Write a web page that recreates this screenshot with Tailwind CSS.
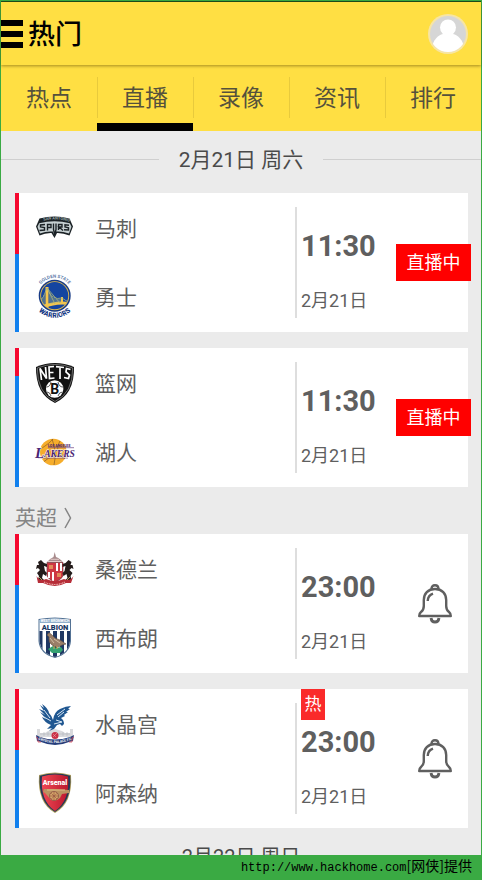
<!DOCTYPE html>
<html lang="zh-CN">
<head>
<meta charset="utf-8">
<meta name="viewport" content="width=device-width, initial-scale=1">
<title>热门</title>
<script src="https://cdn.jsdelivr.net/npm/@tailwindcss/browser@4"></script>
</head>
<body class="flex h-screen flex-col bg-[#3aaa43] font-['Roboto','Noto_Sans_CJK_SC',sans-serif] text-[#5f5f5f]">
<div class="mx-px mt-px flex min-h-0 flex-1 flex-col border-t border-[#174c1c] bg-[#ebebeb]">

  <header class="relative z-10 flex h-[63px] shrink-0 items-center bg-[#ffdf43] pr-[13px] shadow-[0_1px_3px_rgba(90,70,0,0.55)]">
    <button type="button" aria-label="菜单" class="flex w-[22px] flex-col gap-[5px]">
      <span class="h-[6px] bg-black"></span><span class="h-[6px] bg-black"></span><span class="h-[6px] bg-black"></span>
    </button>
    <h1 class="ml-[5px] flex-1 pt-[2px] text-[27px] leading-[36px] font-medium text-black">热门</h1>
    <button type="button" aria-label="我的">
      <svg class="size-[40px]" viewBox="0 0 40 40">
        <defs><clipPath id="av"><circle cx="20" cy="20" r="18"/></clipPath></defs>
        <circle cx="20" cy="20" r="20" fill="#f7e5a4"/>
        <g clip-path="url(#av)"><rect width="40" height="40" fill="#d6d6d6"/><circle cx="20" cy="13.500" r="8" fill="#fff"/><path d="M4 34C5 26 10 21 15 20H25C30 21 35 26 36 34V40H4Z" fill="#fff"/></g>
      </svg>
    </button>
  </header>

  <nav class="grid h-[66px] shrink-0 grid-cols-5 bg-[#ffdf43] text-center text-[23px] leading-[34px] text-[#55513c]">
    <a href="#" class="pt-[17px]">热点</a>
    <a href="#" aria-current="page" class="relative border-b-8 border-black pt-[17px]"><span class="absolute top-3 left-0 h-[41px] w-px bg-[#e8ca3c]"></span>直播</a>
    <a href="#" class="relative pt-[17px]"><span class="absolute top-3 left-0 h-[41px] w-px bg-[#e8ca3c]"></span>录像</a>
    <a href="#" class="relative pt-[17px]"><span class="absolute top-3 left-0 h-[41px] w-px bg-[#e8ca3c]"></span>资讯</a>
    <a href="#" class="relative pt-[17px]"><span class="absolute top-3 left-0 h-[41px] w-px bg-[#e8ca3c]"></span>排行</a>
  </nav>

  <main class="min-h-0 flex-1 overflow-y-auto [scrollbar-width:none]">
    <h2 class="flex h-[62px] items-center gap-5 pb-[5px] text-[21px] leading-[30px] text-[#4a4a4a]">
      <span class="h-px flex-1 bg-[#cfcfcf]"></span>2月21日 周六<span class="h-px flex-1 bg-[#cfcfcf]"></span>
    </h2>

    <div class="mr-[13px] ml-[14px] flex flex-col gap-4">
      <article class="flex min-h-[139px] bg-white">
        <div class="flex w-1 flex-col bg-[#1180ee]"><span class="h-[61px] bg-[#f5082f]"></span></div>
        <div class="grid flex-1 grid-rows-2 pl-[11px] text-[21px] leading-[30px]">
          <div class="flex items-center gap-[17px]">
            <svg class="size-12" viewBox="0 0 48 48" role="img" aria-label="马刺队徽">
              <defs><path id="spa" d="M10 17.500Q24.500 13.500 39 17.500"/></defs>
              <path d="M9.500 14.500Q24.500 10.500 39.500 14.500L43 22.500L39.500 31.500Q33 28.800 27 29L24.500 34L21.500 29Q15 28.800 9.500 31.500L6 22.500Z" fill="#1b2226"/>
              <path d="M9.200 19.200Q24.500 15.200 39.800 19.200L41.500 22.800L39 29.500Q32 27 26 27.500L24.500 31.500L22.800 27.500Q16 27 10 29.500L7.500 22.800Z" fill="#c6d0d2"/>
              <text font-family="Roboto" font-size="4" font-weight="700" fill="#9aa8aa"><textPath href="#spa" startOffset="12%">SAN ANTONIO</textPath></text>
              <g fill="none" stroke="#1b2226" stroke-width="1.400"><path d="M15 20.500L10.500 21V23L14.500 23.500V26L9.500 26.500"/><path d="M17.500 26.500V20.500H21V23.500H17.500"/><path d="M23.500 19.500V25.500L24.800 31L26 25.500V19.500"/><path d="M28.500 26V20.500H32V23H29L33 26.500"/><path d="M39 21.200L35 20.700V23L38.500 23.800V26L34 25.700"/></g>
            </svg><span class="pt-[2px]">马刺</span></div>
          <div class="flex items-center gap-[17px]">
            <svg class="size-12" viewBox="0 0 48 48" role="img" aria-label="勇士队徽">
              <defs><path id="wa" d="M8.500 15A18 18 0 0 1 41 15"/><path id="wb" d="M5.500 34A22.500 22.500 0 0 0 44 34"/><clipPath id="wc"><circle cx="24.700" cy="22.700" r="13.800"/></clipPath></defs>
              <circle cx="24.700" cy="22.700" r="16" fill="#173a85"/><circle cx="24.700" cy="22.700" r="14.500" fill="#e3bd52"/><circle cx="24.700" cy="22.700" r="13.600" fill="#1545a0"/>
              <g clip-path="url(#wc)"><path d="M10 33Q25 27 40 29V32Q25 30 12 36Z" fill="#f4c64d"/><path d="M15.500 14H18.500V35H15.500ZM31 24H33V31H31Z" fill="#f4c64d"/><path d="M17 15Q22 28 32 25Q36 28 39 29M17 15Q14 25 9 29M20 20V31M22 23V31M24 25V30M26 26V30M28 26V30M30 26V30M17 15L30 30M17 15L25 31M14 22V33M12 25V34" fill="none" stroke="#acb77c" stroke-width=".8"/></g>
              <text font-family="Roboto" font-size="4.500" font-weight="700" fill="#5b79a9"><textPath href="#wa" startOffset="50%" text-anchor="middle">GOLDEN STATE</textPath></text>
              <text font-family="Roboto" font-size="7" font-weight="900" fill="#173a85" stroke="#fff" stroke-width="1" paint-order="stroke"><textPath href="#wb" startOffset="50%" text-anchor="middle">WARRIORS</textPath></text>
            </svg><span class="pt-[2px]">勇士</span></div>
        </div>
        <div class="my-[14px] flex w-[173px] items-center justify-between border-l-2 border-[#dedede] pl-1">
          <div class="flex flex-col gap-[25px] self-start pt-[21px]"><time class="text-[29px] leading-9 font-bold">11:30</time><span class="text-[18px] leading-6">2月21日</span></div>
          <button type="button" class="-mr-[3px] h-[37px] w-[75px] bg-[#ff0000] text-[18px] leading-6 text-white">直播中</button>
        </div>
      </article>

      <article class="flex min-h-[139px] bg-white">
        <div class="flex w-1 flex-col bg-[#1180ee]"><span class="h-[28px] bg-[#f5082f]"></span></div>
        <div class="grid flex-1 grid-rows-2 pl-[11px] text-[21px] leading-[30px]">
          <div class="flex items-center gap-[17px]">
            <svg class="size-12" viewBox="0 0 48 48" role="img" aria-label="篮网队徽">
              <path d="M6 8Q25 0 44 8Q44.500 35 25 44Q5.500 35 6 8Z" fill="#111"/>
              <path d="M7.300 9Q25 1.800 42.700 9Q43 34 25 42.500Q7 34 7.300 9Z" fill="none" stroke="#aaa" stroke-width=".6"/>
              <g fill="none" stroke="#fff" stroke-width="1.700"><path d="M11.500 21L10 9.500L16.500 19.500L15.500 8"/><path d="M24 7.500L19 8L19.500 19.500L24.500 19M19.500 13.500H23.500"/><path d="M26 7.700L34 8.500M30 8V20"/><path d="M40.500 10.500L36.500 9.500L36 13L39.500 16L38.500 19.500L34 18.500"/></g>
              <circle cx="24.700" cy="30" r="8.700" fill="#fff"/><path d="M16.500 28Q20 28 21 23M33 28Q29 28 28 23M17 33Q20 33 21 37M32.500 33Q29 33 28 37" fill="none" stroke="#111" stroke-width=".7"/>
              <text x="24.700" y="35" text-anchor="middle" font-family="Roboto" font-size="14" font-weight="700" fill="#111">B</text>
            </svg><span class="pt-[2px]">篮网</span></div>
          <div class="flex items-center gap-[17px]">
            <svg class="size-12" viewBox="0 0 48 48" role="img" aria-label="湖人队徽">
              <circle cx="23.300" cy="24" r="13.300" fill="#f6ad2b"/>
              <path d="M10.500 21Q20 15 23 11M14 33.500Q22 26 36 27M22 11Q27 24 24 37M30 13Q23 23 35 31" fill="none" stroke="#865b28" stroke-width=".7"/>
              <text x="18" y="18.500" font-family="Roboto" font-size="3.500" font-weight="900" fill="#4d276e">LOS ANGELES</text>
              <path d="M18 19.700H44M8 30H38" fill="none" stroke="#6a4084" stroke-width=".7"/>
              <text x="5" y="30" font-family="Liberation Serif" font-size="15" font-style="italic" font-weight="700" fill="#4b2473" stroke="#fff" stroke-width=".8" paint-order="stroke">L</text>
              <text x="14.200" y="28.500" font-family="Liberation Serif" font-size="9.500" font-style="italic" font-weight="700" fill="#4b2473" stroke="#fff" stroke-width=".8" paint-order="stroke">AKERS</text>
            </svg><span class="pt-[2px]">湖人</span></div>
        </div>
        <div class="my-[14px] flex w-[173px] items-center justify-between border-l-2 border-[#dedede] pl-1">
          <div class="flex flex-col gap-[25px] self-start pt-[21px]"><time class="text-[29px] leading-9 font-bold">11:30</time><span class="text-[18px] leading-6">2月21日</span></div>
          <button type="button" class="-mr-[3px] h-[37px] w-[75px] bg-[#ff0000] text-[18px] leading-6 text-white">直播中</button>
        </div>
      </article>
    </div>

    <h2 class="ml-[14px] h-[47px] pt-[16px] text-[21px] leading-[30px] text-[#858585]"><a href="#" class="flex items-center gap-[7px]">英超
      <svg class="h-[22px] w-2" viewBox="0 0 8 22" fill="none" stroke="#858585" stroke-width="1.500"><path d="M1 1L6.500 11L1 21"/></svg></a></h2>

    <div class="mr-[13px] ml-[14px] flex flex-col gap-4">
      <article class="flex min-h-[139px] bg-white">
        <div class="flex w-1 flex-col bg-[#1180ee]"><span class="h-[51px] bg-[#f5082f]"></span></div>
        <div class="grid flex-1 grid-rows-2 pl-[11px] text-[21px] leading-[30px]">
          <div class="flex items-center gap-[17px]">
            <svg class="size-12" viewBox="0 0 48 48" role="img" aria-label="桑德兰队徽">
              <path d="M24.700 7L26 12Q31 14 33 17.500H16.500Q19 14 23.500 12Z" fill="#a88b8c"/><path d="M18 16.500H31.500M20.500 14.300H29" stroke="#e2c9c6" stroke-width="1"/>
              <path d="M17 17.500H33V31Q31 35 25 37Q19 35 17 31Z" fill="#ce3742" stroke="#754249" stroke-width=".7"/>
              <path d="M26 18H28V26H26ZM30 18H32V26H30ZM18 27H20V33H18ZM22 27H24V36H22Z" fill="#fff"/><path d="M19 20H23V24H19ZM27 28H31V32H27Z" fill="#e18b5a"/>
              <g fill="#241c1b"><path id="lion" d="M8 17L11 15L14 18L17 19V22L14 21L15 26L17 28L16 31L13 29L12 33L14 35H8L9 31L7 28L10 25L8 23L6 24L7 20L9 20Z"/><use href="#lion" transform="translate(49.500 0) scale(-1 1)"/></g>
              <path d="M6.500 31Q10 37 16 34Q25 38 34 34Q40 37 43.500 31L41 38H36Q25 44 13 38H8Z" fill="#b62d38"/><path d="M14 37Q25 42 35 37" fill="none" stroke="#efb6b2" stroke-width="1.200" stroke-dasharray="1 .7"/><path d="M9 32L12 35M40 32L37 35" stroke="#b99b62"/>
            </svg><span class="pt-[2px]">桑德兰</span></div>
          <div class="flex items-center gap-[17px]">
            <svg class="size-12" viewBox="0 0 48 48" role="img" aria-label="西布朗队徽">
              <defs><clipPath id="wba"><path d="M9.500 6Q25 3 40 6V27Q39 39 25 43Q11 39 9.500 27Z"/></clipPath></defs>
              <path d="M8.500 5Q25 2 41 5V27Q40 40 25 44Q9.500 40 8.500 27Z" fill="#537294"/>
              <g clip-path="url(#wba)"><rect width="48" height="48" fill="#fff"/><path d="M9 17H12.500V44H9ZM16 17H20V44H16ZM23 17H27V44H23ZM30 17H34V44H30ZM37 17H41V44H37Z" fill="#203864"/><rect x="9" y="4" width="32" height="5" fill="#8faecb"/></g>
              <text x="25" y="8.300" text-anchor="middle" font-family="Roboto" font-size="3.500" font-weight="700" fill="#fff">WEST BROMWICH</text>
              <text x="25" y="16" text-anchor="middle" font-family="Roboto" font-size="7.500" font-weight="900" fill="#183763">ALBION</text>
              <path d="M18 35L23 32L26 34L31 33L33 36L30 39H22Z" fill="#35a271"/><path d="M17 21L19 18.500L22 21Q25 25 30 26L36 30L32 31Q27 35 22 31Q18 28 19 23Z" fill="#9a7e68" stroke="#604f42" stroke-width=".6"/><path d="M20 24L24 29M24 25L30 29" stroke="#d1bda2"/><path d="M24 32V35M27 32V35" stroke="#d5a955"/>
            </svg><span class="pt-[2px]">西布朗</span></div>
        </div>
        <div class="my-[14px] flex w-[173px] items-center justify-between border-l-2 border-[#dedede] pr-4 pl-1">
          <div class="flex flex-col gap-[25px] self-start pt-[21px]"><time class="text-[29px] leading-9 font-bold">23:00</time><span class="text-[18px] leading-6">2月21日</span></div>
          <button type="button" aria-label="提醒"><svg class="h-10 w-[34px]" viewBox="0 0 34 40" fill="none" stroke="#5f5f5f" stroke-width="2.400" stroke-linejoin="round"><path d="M13.500 5.200Q13.500 1.200 17 1.200Q20.500 1.200 20.500 5.200"/><path d="M17 5C10 5 5.800 9.500 5.800 16V22Q5.800 26 3 28Q1.200 29.500 1.200 32H32.800Q32.800 29.500 31 28Q28.200 26 28.200 22V16C28.200 9.500 24 5 17 5Z"/><path d="M9.700 17Q10 11.500 15 9.700"/><path d="M13 34Q13.500 38 17 38Q20.500 38 21 34" stroke-width="2.800"/></svg></button>
        </div>
      </article>

      <article class="relative flex min-h-[139px] bg-white">
        <div class="flex w-1 flex-col bg-[#1180ee]"><span class="h-[61px] bg-[#f5082f]"></span></div>
        <div class="grid flex-1 grid-rows-2 pl-[11px] text-[21px] leading-[30px]">
          <div class="flex items-center gap-[17px]">
            <svg class="size-12" viewBox="0 0 48 48" role="img" aria-label="水晶宫队徽">
              <defs><path id="cp" d="M8 39.500Q25 46.500 42 39.500"/></defs>
              <path d="M7 29H10V33H15L18 31L25 29L32 31L35 33H40V29H43V37H7Z" fill="#d9dadd"/><path d="M10 34H40M14 32V36M18 32V36M33 32V36M37 32V36" stroke="#b4b7bc" stroke-width=".6"/>
              <path d="M10 5L14 8L12 4Q18 8 19 13Q22 16 23 20Q24 12 30 9Q36 6 41 6L38 9L40 9L36 12L38 12L34 15L35 16L31 18Q34 20 34 24L32 26L30 24L27 25L24 29L19 31L22 28L17 29L21 25Q14 22 12 17L16 19L10 12L15 15L9 9L14 11Z" fill="#205791"/>
              <path d="M14 10L20 18M14 17L21 21M27 15L35 9M28 17L34 12M26 20L32 22L28 23L24 24" stroke="#d8e6f1" stroke-width="1" fill="none"/>
              <circle cx="25" cy="35.500" r="3.500" fill="#ca3147"/><path d="M23 34L26 37M27 33L23 37" stroke="#edb3b9" stroke-width=".5"/>
              <path d="M6 35L10 37Q25 42 40 37L44 35L43 41L39 42Q25 48 11 42L7 41Z" fill="#263e7b"/><path d="M6 37L8 38V42H11M44 37L42 38V42H39" fill="none" stroke="#d64c5c" stroke-width=".8"/>
              <text font-family="Roboto" font-size="3.500" font-weight="700" fill="#fff"><textPath href="#cp" startOffset="50%" text-anchor="middle">CRYSTAL PALACE F.C</textPath></text>
            </svg><span class="pt-[2px]">水晶宫</span></div>
          <div class="flex items-center gap-[17px]">
            <svg class="size-12" viewBox="0 0 48 48" role="img" aria-label="阿森纳队徽">
              <defs><linearGradient id="ars"><stop stop-color="#ef4753"/><stop offset="1" stop-color="#bb182e"/></linearGradient></defs>
              <path d="M9 6Q25 1 41 6Q43 34 25 44Q7 34 9 6Z" fill="#b3a05e"/><path d="M9.700 6.800Q25 2 40.300 6.800Q42 33 25 43Q8 33 9.700 6.800Z" fill="#263955"/><path d="M12 7.500Q25 3.500 38 7.500Q40 32 25 42Q10 32 12 7.500Z" fill="url(#ars)"/>
              <text x="25" y="16" text-anchor="middle" font-family="Roboto" font-size="7" font-weight="900" fill="#fff">Arsenal</text>
              <path d="M14 20L23 20L39 21V24L32 25L30 29Q26 33 21 31L15 24L13 23Z" fill="#bb9260"/><circle cx="24" cy="27" r="4.500" fill="#d5a569" stroke="#81443d" stroke-width=".7"/><path d="M24 23V31M20 27H28M21.300 24.300L27 30M27 24.300L21.300 30" stroke="#914b3d" stroke-width=".6"/><path d="M17 21H35" stroke="#e0be85"/>
            </svg><span class="pt-[2px]">阿森纳</span></div>
        </div>
        <div class="my-[14px] flex w-[173px] items-center justify-between border-l-2 border-[#dedede] pr-4 pl-1">
          <div class="flex flex-col gap-[25px] self-start pt-[21px]"><time class="text-[29px] leading-9 font-bold">23:00</time><span class="text-[18px] leading-6">2月21日</span></div>
          <button type="button" aria-label="提醒"><svg class="h-10 w-[34px]" viewBox="0 0 34 40" fill="none" stroke="#5f5f5f" stroke-width="2.400" stroke-linejoin="round"><path d="M13.500 5.200Q13.500 1.200 17 1.200Q20.500 1.200 20.500 5.200"/><path d="M17 5C10 5 5.800 9.500 5.800 16V22Q5.800 26 3 28Q1.200 29.500 1.200 32H32.800Q32.800 29.500 31 28Q28.200 26 28.200 22V16C28.200 9.500 24 5 17 5Z"/><path d="M9.700 17Q10 11.500 15 9.700"/><path d="M13 34Q13.500 38 17 38Q20.500 38 21 34" stroke-width="2.800"/></svg></button>
        </div>
        <span class="absolute top-0 right-[143px] h-[31px] w-6 bg-[#fa2a2a] text-center text-[17px] leading-[31px] text-white">热</span>
      </article>
    </div>

    <h2 class="flex h-[62px] items-center gap-5 pb-[5px] text-[20px] leading-[30px] text-[#4a4a4a]">
      <span class="h-px flex-1 bg-[#cfcfcf]"></span>2月22日 周日<span class="h-px flex-1 bg-[#cfcfcf]"></span>
    </h2>
  </main>
</div>
<footer class="flex h-[25px] shrink-0 items-baseline justify-end pr-[10px] text-black">
  <span class="font-['Liberation_Mono',monospace] text-[12px] leading-5">http://www.hackhome.com</span><span class="font-['Noto_Sans_CJK_SC',sans-serif] text-[14px] leading-5">[网侠]提供</span>
</footer>
</body>
</html>
